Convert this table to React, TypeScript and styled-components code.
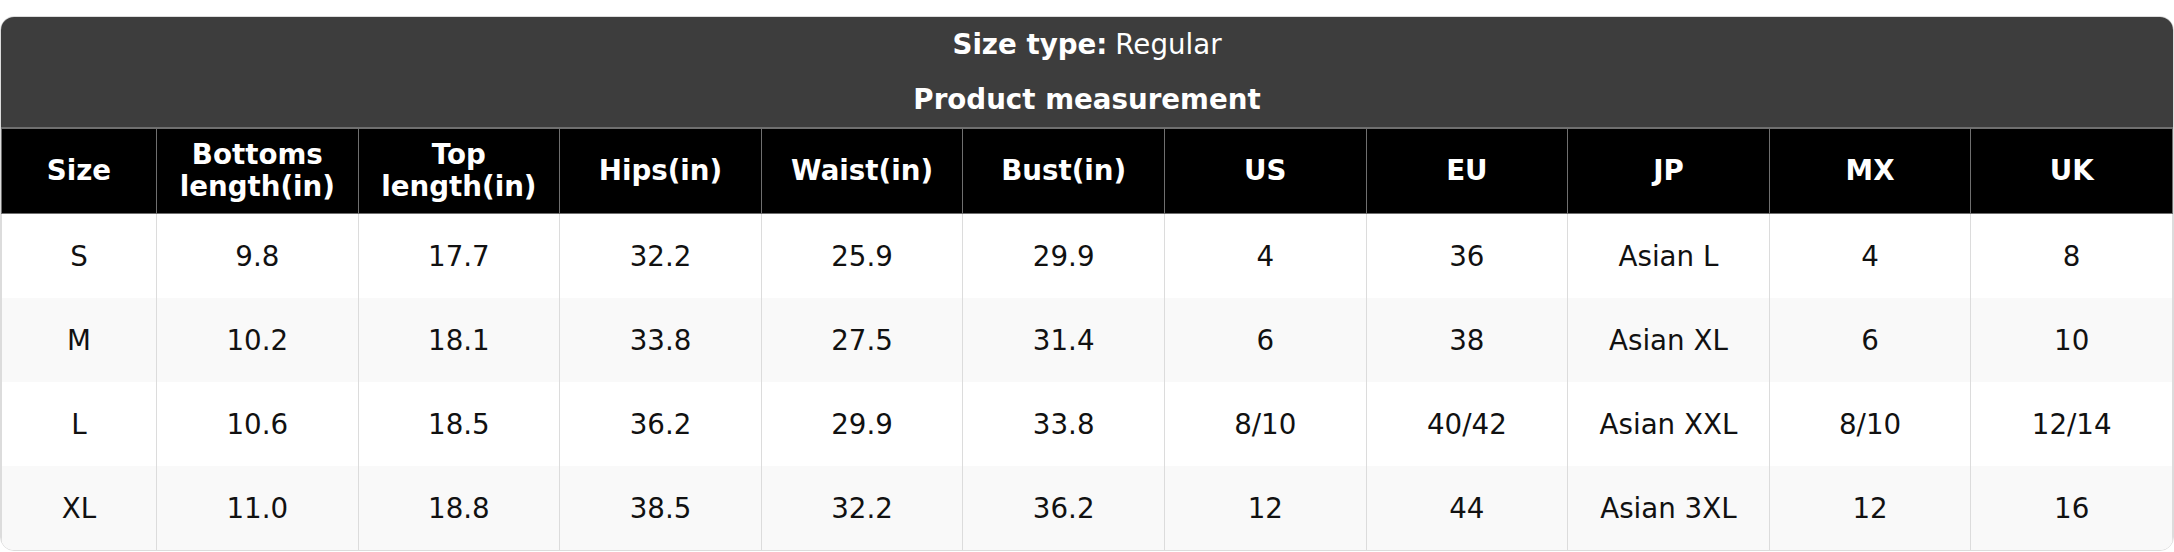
import { FC } from 'react'
import styled, { createGlobalStyle } from 'styled-components'

const GlobalStyle = createGlobalStyle`
  body {
    margin: 0;
    background: #fff;
    font-family: 'DejaVu Sans', Verdana, sans-serif;
  }
`

const Page = styled.div`
  padding-top: 16px;
`

const Card = styled.div`
  width: 2174px;
  box-sizing: border-box;
  border: 1px solid #dcdcdc;
  border-radius: 14px;
  overflow: hidden;
  background: #fff;
`

const TitleBar = styled.div`
  background: #3d3d3d;
  color: #fff;
  display: flex;
  flex-direction: column;
`

const TitleLine = styled.div<{ $bold?: boolean }>`
  height: 55px;
  display: flex;
  align-items: center;
  justify-content: center;
  font-size: 27.7px;
  font-weight: ${({ $bold }) => ($bold ? 700 : 400)};
`

const Label = styled.span`
  font-weight: 700;
  margin-right: 8px;
`

const Table = styled.table`
  width: 100%;
  border-collapse: collapse;
  table-layout: fixed;
`

const HeadCell = styled.th`
  background: #000;
  color: #fff;
  height: 84px;
  padding: 0 6px;
  font-size: 27.7px;
  font-weight: 700;
  line-height: 32px;
  text-align: center;
  vertical-align: middle;
  border: 1px solid #6f6f6f;
  border-top-width: 2px;
`

const BodyRow = styled.tr<{ $striped: boolean }>`
  background: ${({ $striped }) => ($striped ? '#f9f9f9' : '#fff')};
`

const BodyCell = styled.td`
  height: 84px;
  padding: 0;
  font-size: 27.7px;
  color: #111;
  text-align: center;
  vertical-align: middle;
  border-left: 1px solid #dcdcdc;
  border-right: 1px solid #dcdcdc;
`

const columns = [
  'Size',
  'Bottoms length(in)',
  'Top length(in)',
  'Hips(in)',
  'Waist(in)',
  'Bust(in)',
  'US',
  'EU',
  'JP',
  'MX',
  'UK'
]

const rows = [
  ['S', '9.8', '17.7', '32.2', '25.9', '29.9', '4', '36', 'Asian L', '4', '8'],
  ['M', '10.2', '18.1', '33.8', '27.5', '31.4', '6', '38', 'Asian XL', '6', '10'],
  ['L', '10.6', '18.5', '36.2', '29.9', '33.8', '8/10', '40/42', 'Asian XXL', '8/10', '12/14'],
  ['XL', '11.0', '18.8', '38.5', '32.2', '36.2', '12', '44', 'Asian 3XL', '12', '16']
]

const SizeChart: FC = () => (
  <Card>
    <TitleBar>
      <TitleLine>
        <Label>Size type:</Label>Regular
      </TitleLine>
      <TitleLine $bold>Product measurement</TitleLine>
    </TitleBar>
    <Table>
      <colgroup>
        <col style={{ width: 155 }} />
        {columns.slice(1).map((c) => (
          <col key={c} />
        ))}
      </colgroup>
      <thead>
        <tr>
          {columns.map((c) => (
            <HeadCell key={c}>{c}</HeadCell>
          ))}
        </tr>
      </thead>
      <tbody>
        {rows.map((row, i) => (
          <BodyRow key={row[0]} $striped={i % 2 === 1}>
            {row.map((v, j) => (
              <BodyCell key={j}>{v}</BodyCell>
            ))}
          </BodyRow>
        ))}
      </tbody>
    </Table>
  </Card>
)

export default function App() {
  return (
    <>
      <GlobalStyle />
      <Page>
        <SizeChart />
      </Page>
    </>
  )
}
